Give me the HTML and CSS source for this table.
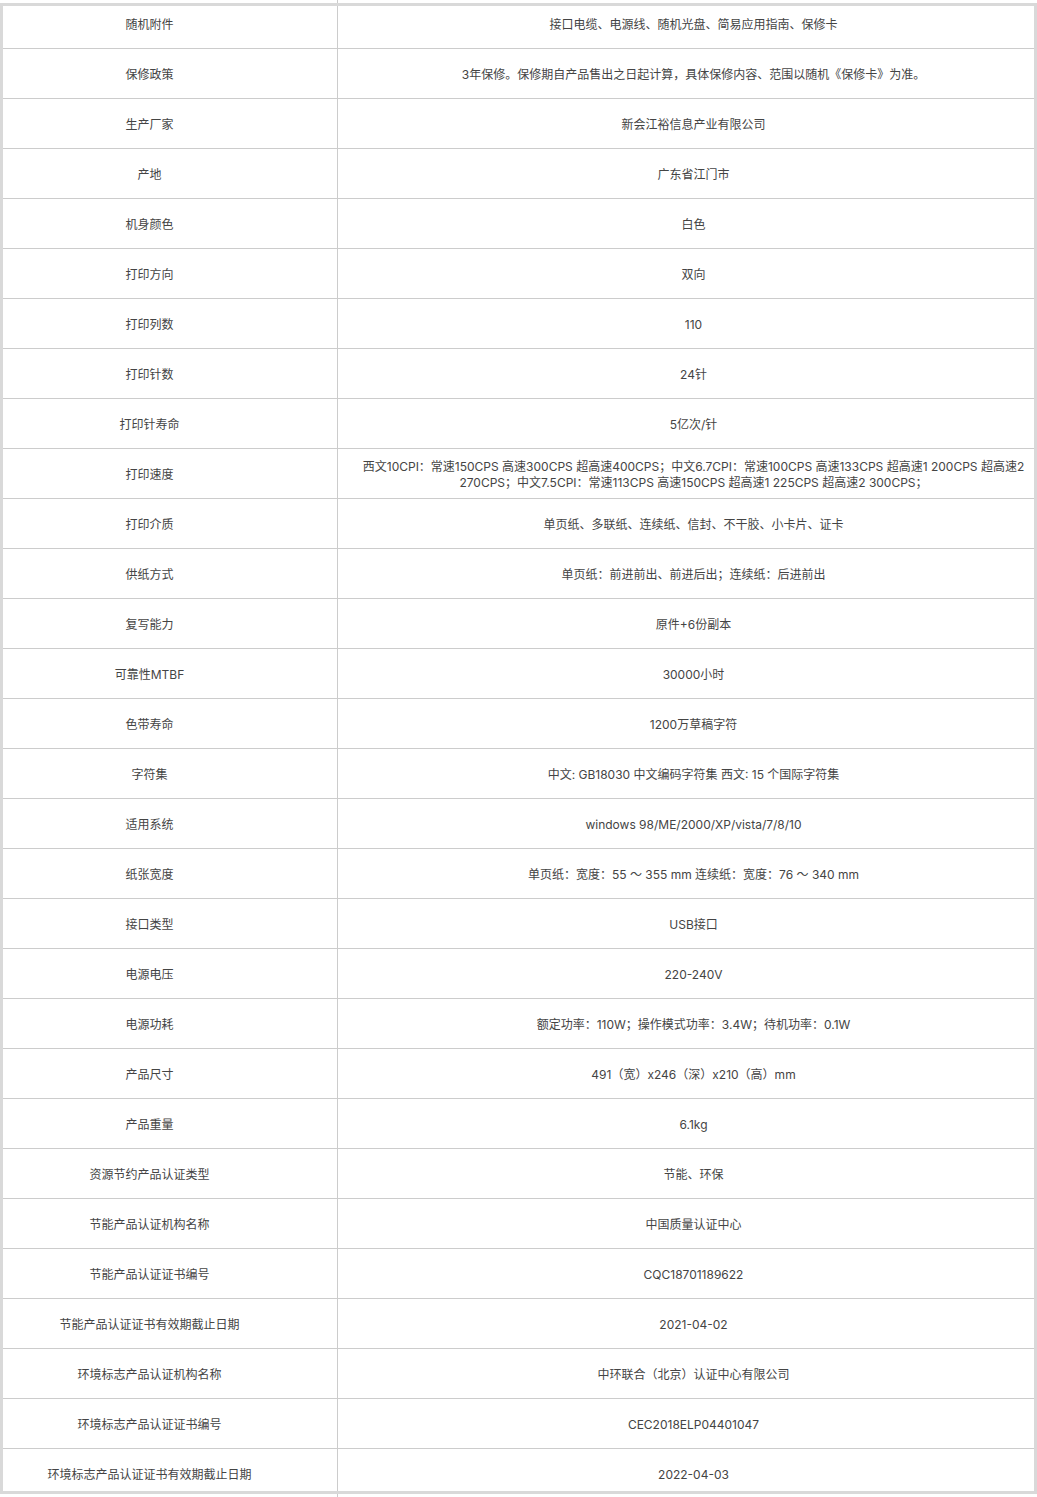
FILE: index.html
```html
<!DOCTYPE html>
<html lang="zh-CN">
<head>
<meta charset="utf-8">
<title>产品参数</title>
<link rel="stylesheet" href="styles.css">
</head>
<body>
<div class="viewport">
<table class="spec">
<colgroup><col class="c1"><col class="c2"></colgroup>
<tbody>
<tr><td>随机附件</td><td>接口电缆、电源线、随机光盘、简易应用指南、保修卡</td></tr>
<tr><td>保修政策</td><td>3年保修。保修期自产品售出之日起计算，具体保修内容、范围以随机《保修卡》为准。</td></tr>
<tr><td>生产厂家</td><td>新会江裕信息产业有限公司</td></tr>
<tr><td>产地</td><td>广东省江门市</td></tr>
<tr><td>机身颜色</td><td>白色</td></tr>
<tr><td>打印方向</td><td>双向</td></tr>
<tr><td>打印列数</td><td>110</td></tr>
<tr><td>打印针数</td><td>24针</td></tr>
<tr><td>打印针寿命</td><td>5亿次/针</td></tr>
<tr><td>打印速度</td><td>西文10CPI：常速150CPS 高速300CPS 超高速400CPS；中文6.7CPI：常速100CPS 高速133CPS 超高速1 200CPS 超高速2 270CPS；中文7.5CPI：常速113CPS 高速150CPS 超高速1 225CPS 超高速2 300CPS；</td></tr>
<tr><td>打印介质</td><td>单页纸、多联纸、连续纸、信封、不干胶、小卡片、证卡</td></tr>
<tr><td>供纸方式</td><td>单页纸：前进前出、前进后出；连续纸：后进前出</td></tr>
<tr><td>复写能力</td><td>原件+6份副本</td></tr>
<tr><td>可靠性MTBF</td><td>30000小时</td></tr>
<tr><td>色带寿命</td><td>1200万草稿字符</td></tr>
<tr><td>字符集</td><td>中文: GB18030 中文编码字符集 西文: 15 个国际字符集</td></tr>
<tr><td>适用系统</td><td>windows 98/ME/2000/XP/vista/7/8/10</td></tr>
<tr><td>纸张宽度</td><td>单页纸：宽度：55 ～ 355 mm 连续纸：宽度：76 ～ 340 mm</td></tr>
<tr><td>接口类型</td><td>USB接口</td></tr>
<tr><td>电源电压</td><td>220-240V</td></tr>
<tr><td>电源功耗</td><td>额定功率：110W；操作模式功率：3.4W；待机功率：0.1W</td></tr>
<tr><td>产品尺寸</td><td>491（宽）x246（深）x210（高）mm</td></tr>
<tr><td>产品重量</td><td>6.1kg</td></tr>
<tr><td>资源节约产品认证类型</td><td>节能、环保</td></tr>
<tr><td>节能产品认证机构名称</td><td>中国质量认证中心</td></tr>
<tr><td>节能产品认证证书编号</td><td>CQC18701189622</td></tr>
<tr><td>节能产品认证证书有效期截止日期</td><td>2021-04-02</td></tr>
<tr><td>环境标志产品认证机构名称</td><td>中环联合（北京）认证中心有限公司</td></tr>
<tr><td>环境标志产品认证证书编号</td><td>CEC2018ELP04401047</td></tr>
<tr><td>环境标志产品认证证书有效期截止日期</td><td>2022-04-03</td></tr>
</tbody>
</table>
<div class="frame"></div>
</div>
</body>
</html>
```
FILE: styles.css
```css
html, body {
  margin: 0;
  padding: 0;
  background: #fff;
}
body {
  overflow: hidden;
  font-family: "Inter", "Noto Sans CJK SC", sans-serif;
  font-size: 12px;
  color: #444;
}
.viewport {
  position: relative;
  width: 1037px;
  height: 1497px;
  overflow: hidden;
}
.spec {
  border-collapse: collapse;
  table-layout: fixed;
  width: 1089px;
  margin-top: -2px;
  margin-left: -39px;
}
.c1 { width: 376px; }
.c2 { width: 712px; }
.spec td {
  border: 1px solid #cccccc;
  height: 50px;
  padding: 2px 10px 0;
  box-sizing: border-box;
  text-align: center;
  vertical-align: middle;
  line-height: 16px;
}
.frame {
  position: absolute;
  left: 0;
  top: 3px;
  width: 1037px;
  height: 1491px;
  box-sizing: border-box;
  border: 3px solid #d9d9d9;
  pointer-events: none;
}
```
